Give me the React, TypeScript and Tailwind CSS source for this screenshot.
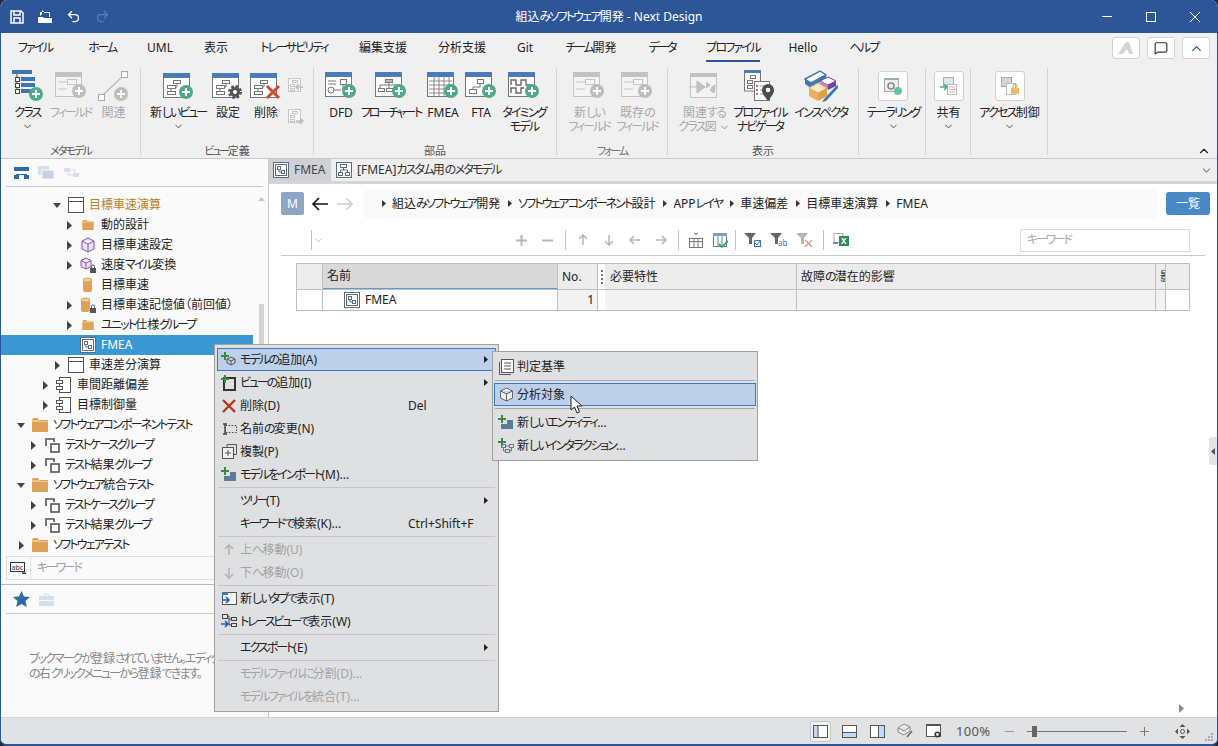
import type { ReactNode } from "react";
import { ChevronDown, ChevronUp, MessageSquare, Redo2, Undo2 } from "lucide-react";

const GREEN = "#4fa987";

// the kana in the screenshot's UI font run narrower than in Noto Sans CJK even with palt
function T({ children }: { children: string }) {
  const parts = children.split(/([ぁ-んァ-ヶー。]+)/).filter(Boolean);
  return (
    <span>
      {parts.map((p, i) => {
        if (!/^[ぁ-んァ-ヶー。]/.test(p)) return p;
        const bars = (p.match(/ー/g) ?? []).length;
        const cut = ((p.length - bars) * 1.8 + bars * 3) / p.length;
        return (
          <span key={i} style={{ letterSpacing: `${-cut}px` }}>
            {p}
          </span>
        );
      })}
    </span>
  );
}

function Badge({ x, y, dim }: { x: number; y: number; dim?: boolean }) {
  return (
    <g>
      <circle cx={x} cy={y} r="7" fill={dim ? "#bdbdbd" : GREEN} />
      <path d={`M${x - 4} ${y}h8M${x} ${y - 4}v8`} stroke="#fff" strokeWidth="2" />
    </g>
  );
}

function Win({ dim, children, extra }: { dim?: boolean; children?: ReactNode; extra?: ReactNode }) {
  const line = dim ? "#c4c4c4" : "#777";
  return (
    <svg width="32" height="28" viewBox="0 0 32 28" fill="none">
      <rect x="0.5" y="1.5" width="26" height="24" fill={dim ? "#f4f4f4" : "#fff"} stroke={line} />
      <rect x="0" y="1" width="27" height="5" fill={dim ? "#c2c2c2" : "#4a7db8"} />
      <g stroke={line}>{children}</g>
      {extra}
    </svg>
  );
}

const treeLines = (
  <>
    <rect x="10.5" y="8.5" width="7" height="3" />
    <rect x="4.5" y="13.5" width="8" height="3" />
    <rect x="4.5" y="19.5" width="8" height="3" />
    <path d="M14 12v3h-1M8 17v2" />
  </>
);

const fieldLines = (
  <>
    <path d="M3 11h6M3 18h6M9 11h3M9 18h3" />
    <rect x="12.5" y="8.5" width="9" height="5" />
  </>
);

function ClassIcon() {
  return (
    <svg width="32" height="32" viewBox="0 0 32 32" fill="none">
      <rect x="0" y="0" width="20" height="4" fill="#3d76b5" />
      <path d="M5 4v17h3M5 9h3M5 15h3" stroke="#444" />
      <g fill="#fff" stroke="#444">
        <rect x="3.5" y="7.5" width="4" height="4" />
        <rect x="3.5" y="13.5" width="4" height="4" />
        <rect x="3.5" y="19.5" width="4" height="4" />
      </g>
      <rect x="9" y="7" width="14" height="4" fill="#3d76b5" />
      <rect x="9" y="13" width="14" height="4" fill="#3d76b5" />
      <rect x="9" y="19" width="10" height="4" fill="#3d76b5" />
      <Badge x={24} y={24} />
    </svg>
  );
}

function AssocIcon() {
  return (
    <svg width="32" height="32" viewBox="0 0 32 32" fill="none">
      <path d="M5 25L25 6" stroke="#bdbdbd" strokeWidth="1.5" />
      <rect x="0.5" y="24.5" width="6" height="6" fill="#fff" stroke="#a8a8a8" />
      <rect x="23.5" y="1.5" width="6" height="6" fill="#fff" stroke="#a8a8a8" />
      <Badge x={23} y={24} dim />
    </svg>
  );
}

function SmallDim({ down }: { down?: boolean }) {
  return (
    <svg width="17" height="17" viewBox="0 0 17 17" fill="none" stroke="#c8c8c8">
      <rect x="1.5" y="1.5" width="12" height="13" fill="#f7f7f7" />
      <rect x="5.5" y="3.5" width="5" height="2" />
      <rect x="3.5" y="7.5" width="4" height="2" />
      <rect x="3.5" y="11.5" width="4" height="2" />
      <path d={down ? "M9 13h7M13 10l3 3-3 3" : "M9 10h7M12 7l-3 3 3 3"} stroke="#bcbcbc" strokeWidth="1.5" />
    </svg>
  );
}

function FlowIcon() {
  return (
    <Win extra={<Badge x={24} y={20} />}>
      <path d="M10 10h8M14 11v3M5 17v-3h18v3M14 14v3" />
      <rect x="10.5" y="8.5" width="7" height="3" />
      <rect x="3.5" y="17.5" width="6" height="3" />
      <rect x="11.5" y="17.5" width="6" height="3" />
    </Win>
  );
}

function DfdIcon() {
  return (
    <Win extra={<Badge x={24} y={20} />}>
      <path d="M3 10h8M3 13h8M9 19h7" />
      <rect x="15.5" y="8.5" width="6" height="5" />
      <circle cx="6" cy="19" r="3" />
      <path d="M18 14v5" />
    </Win>
  );
}

function GridIcon() {
  return (
    <Win extra={<Badge x={24} y={20} />}>
      <path d="M2 10h23M2 14h23M2 18h23M2 22h23M7 6v19M12 6v19M17 6v19M22 6v19" stroke="#8a8a8a" />
    </Win>
  );
}

function FtaIcon() {
  return (
    <Win extra={<Badge x={24} y={20} />}>
      <rect x="12.5" y="8.5" width="6" height="4" />
      <rect x="4.5" y="18.5" width="7" height="4" />
      <path d="M15 13v3H8v2" />
    </Win>
  );
}

function TimingIcon() {
  return (
    <Win extra={<Badge x={24} y={20} />}>
      <path d="M3 14V9h5v5h5V9h5v5h6M3 22v-5h5v5h5v-5h3" strokeWidth="1.4" stroke="#666" />
    </Win>
  );
}

function RelatedIcon() {
  return (
    <svg width="30" height="27" viewBox="0 0 30 27" fill="none">
      <rect x="1.5" y="1.5" width="26" height="24" fill="#f4f4f4" stroke="#c4c4c4" />
      <rect x="1" y="1" width="27" height="4" fill="#c2c2c2" />
      <path d="M0 15h12M8 9l8 6-8 6z M17 10l4 3-4 3M22 16l4-3-1 8-4-3" fill="#c2c2c2" stroke="#bbb" />
    </svg>
  );
}

function NavigatorIcon() {
  return (
    <svg width="33" height="32" viewBox="0 0 33 32" fill="none">
      <rect x="0.5" y="1" width="16" height="20" fill="#fff" stroke="#777" />
      <rect x="0" y="0" width="17" height="3" fill="#4a7db8" />
      <g stroke="#777" fill="#fff">
        <rect x="6.5" y="5.5" width="5" height="3" />
        <rect x="3.5" y="10.5" width="5" height="3" />
        <rect x="3.5" y="15.5" width="5" height="3" />
      </g>
      <rect x="10.5" y="11.5" width="15" height="19" fill="#fff" stroke="#777" />
      <path d="M13 15v12" stroke="#c0392b" strokeDasharray="2 2" strokeWidth="1.5" />
      <path d="M16 16h5M16 20h5M16 24h5" stroke="#999" />
      <path d="M24 31c-4-5-6-8-6-11a6 6 0 0112 0c0 3-2 6-6 11z" fill="#4c4c4c" />
      <circle cx="24" cy="20" r="2.3" fill="#fff" />
    </svg>
  );
}

function InspectorIcon() {
  return (
    <svg width="34" height="32" viewBox="0 0 34 32" fill="none">
      <path d="M1 9L16 1l6 4L7 13z" fill="#fff" stroke="#3d76b5" strokeWidth="1.5" />
      <path d="M1 9l6 4v5l-6-4z" fill="#3d76b5" />
      <path d="M7 13L22 5v3L7 18z" fill="#3d76b5" />
      <path d="M16 11l8-4 8 4-8 4z" fill="#fff" stroke="#7b3fa0" />
      <path d="M24 15l8-4v5l-8 4z" fill="#7b3fa0" />
      <path d="M16 11l8 4v5l-8-4z" fill="#b78ad0" />
      <path d="M5 18l9-5 9 5-9 5z" fill="#fbe9c8" stroke="#e8ad58" />
      <path d="M5 18l9 5v8l-9-5z" fill="#eab05f" />
      <path d="M14 23l9-5v8l-9 5z" fill="#e0a04a" />
      <path d="M33 15L20 29l-2 3 4-1 13-14z" fill="#3d76b5" />
    </svg>
  );
}

function SoftBox({ children }: { children: ReactNode }) {
  return (
    <div className="flex h-[30px] w-[30px] items-center justify-center rounded-[3px] border border-[#cfcfcf] bg-white">
      <svg width="20" height="20" viewBox="0 0 20 20" fill="none">
        {children}
      </svg>
    </div>
  );
}

const tailorIcon = (
  <>
    <rect x="1.5" y="2.5" width="14" height="13" fill="#eee" stroke="#aaa" />
    <rect x="1" y="2" width="15" height="2" fill="#9ab" />
    <circle cx="8" cy="10" r="3" stroke="#888" strokeWidth="1.5" />
    <circle cx="15" cy="15" r="4" fill="#6cc3a0" />
  </>
);
const shareIcon = (
  <>
    <rect x="4.5" y="1.5" width="10" height="8" fill="#dde5ef" stroke="#aab" />
    <rect x="8.5" y="8.5" width="9" height="10" fill="#fff" stroke="#bbb" />
    <path d="M10 11h6M10 13.5h6M10 16h6" stroke="#e3a9a0" />
    <path d="M1 11h6M5 8l3 3-3 3" stroke="#4fa987" strokeWidth="1.6" />
  </>
);
const accessIcon = (
  <>
    <rect x="1.5" y="1.5" width="10" height="9" fill="#d5d5d5" stroke="#aaa" />
    <rect x="6.5" y="7.5" width="9" height="11" fill="#fff" stroke="#bbb" />
    <rect x="11" y="12" width="8" height="6" fill="#eebb66" />
    <path d="M13 12V10a2 2 0 014 0v2" stroke="#d9a64f" />
  </>
);

function RBtn({
  w,
  icon,
  lines,
  chevron,
  dim,
  inlineChevron,
}: {
  w: string;
  icon: ReactNode;
  lines: string[];
  chevron?: boolean;
  dim?: boolean;
  inlineChevron?: boolean;
}) {
  return (
    <div className={`flex shrink-0 flex-col items-center ${w} ${dim ? "text-[#a8a8a8]" : "text-[#222]"}`}>
      <div className="flex h-[38px] items-start justify-center pt-[3px]">{icon}</div>
      {lines.map((l, i) => (
        <div key={l} className="flex items-center whitespace-nowrap text-[12px] leading-[14px]">
          <T>{l}</T>
          {inlineChevron && i === lines.length - 1 && <ChevronDown size={11} className="ml-[2px] text-[#888]" />}
        </div>
      ))}
      {chevron && <ChevronDown size={11} className="mt-[1px] text-[#444]" />}
    </div>
  );
}

function Group({ w, pl, label, dim, children }: { w: string; pl: string; label: string; dim?: boolean; children: ReactNode }) {
  return (
    <div className={`flex h-[87px] shrink-0 flex-col border-r border-[#d4d4d4] ${w}`}>
      <div className={`flex flex-1 items-start ${pl}`}>{children}</div>
      <div className={`-mb-[4px] h-[16px] text-center text-[11px] leading-[16px] ${dim ? "text-[#777]" : "text-[#555]"}`}>
        <T>{label}</T>
      </div>
    </div>
  );
}

const tabs = [
  { t: "ファイル", w: "w-[68px]" },
  { t: "ホーム", w: "w-[66px]" },
  { t: "UML", w: "w-[50px]" },
  { t: "表示", w: "w-[62px]" },
  { t: "トレーサビリティ", w: "w-[94px]" },
  { t: "編集支援", w: "w-[84px]" },
  { t: "分析支援", w: "w-[74px]" },
  { t: "Git", w: "w-[52px]" },
  { t: "チーム開発", w: "w-[80px]" },
  { t: "データ", w: "w-[62px]" },
  { t: "プロファイル", w: "w-[80px]" },
  { t: "Hello", w: "w-[60px]" },
  { t: "ヘルプ", w: "w-[62px]" },
];

function Ribbon() {
  return (
    <div className="h-[126px] shrink-0 border-b border-[#c8c8c8] bg-[#f0f0f0]">
      <div className="flex h-[34px] items-start">
        {tabs.map((x) => (
          <div key={x.t} className={`flex shrink-0 justify-center pt-[7px] ${x.w}`}>
            <span
              className={`h-[22px] whitespace-nowrap text-[12px] leading-[16px] text-[#222] ${
                x.t === "プロファイル" ? "border-b-[2px] border-[#2c5697]" : ""
              }`}
            >
              <T>{x.t}</T>
            </span>
          </div>
        ))}
        <div className="ml-auto flex gap-[7px] pr-[7px] pt-[4px]">
          <div className="flex h-[22px] w-[28px] items-center justify-center rounded-[3px] border border-[#d2d2d2] bg-white">
            <svg width="16" height="14" viewBox="0 0 16 14">
              <path d="M0 13L8 1h3l4 12H11L9 8 5 13z" fill="#d4d4d4" />
            </svg>
          </div>
          <div className="flex h-[22px] w-[28px] items-center justify-center rounded-[3px] border border-[#d2d2d2] bg-white">
            <MessageSquare size={14} className="text-[#333]" />
          </div>
          <div className="flex h-[22px] w-[28px] items-center justify-center rounded-[3px] border border-[#d2d2d2] bg-white">
            <ChevronUp size={15} className="text-[#2c5697]" />
          </div>
        </div>
      </div>
      <div className="flex h-[91px] items-start pt-px">
        <Group w="w-[140px]" pl="pl-[5px]" label="メタモデル">
          <RBtn w="w-[43px]" icon={<div className="-mt-px"><ClassIcon /></div>} lines={["クラス"]} chevron />
          <RBtn w="w-[43px]" dim icon={<Win dim extra={<Badge x={24} y={20} dim />}>{fieldLines}</Win>} lines={["フィールド"]} />
          <RBtn w="w-[43px]" dim icon={<div className="-mt-px"><AssocIcon /></div>} lines={["関連"]} />
        </Group>
        <Group w="w-[173px]" pl="pl-[6px]" label="ビュー定義">
          <RBtn w="w-[62px]" icon={<div className="pl-[2px] pt-[1px]"><Win extra={<Badge x={23} y={20} />}>{treeLines}</Win></div>} lines={["新しいビュー"]} chevron />
          <RBtn
            w="w-[38px]"
            icon={
              <div className="pt-[1px]">
                <Win
                  extra={
                    <g>
                      <circle cx="23" cy="20" r="5.5" stroke="#555" strokeWidth="3" strokeDasharray="2.5 1.8" />
                      <circle cx="23" cy="20" r="5" fill="#555" />
                      <circle cx="23" cy="20" r="2" fill="#fff" />
                    </g>
                  }
                >
                  {treeLines}
                </Win>
              </div>
            }
            lines={["設定"]}
          />
          <RBtn
            w="w-[38px]"
            icon={
              <div className="pt-[1px]">
                <Win extra={<path d="M17 14l12 12M29 14L17 26" stroke="#d24a2e" strokeWidth="3" />}>{treeLines}</Win>
              </div>
            }
            lines={["削除"]}
          />
          <div className="flex w-[20px] flex-col items-center gap-[14px] pt-[9px]">
            <SmallDim />
            <SmallDim down />
          </div>
        </Group>
        <Group w="w-[243px]" pl="pl-[9px]" label="部品">
          <RBtn w="w-[36px]" icon={<DfdIcon />} lines={["DFD"]} />
          <RBtn w="w-[64px]" icon={<FlowIcon />} lines={["フローチャート"]} />
          <RBtn w="w-[40px]" icon={<GridIcon />} lines={["FMEA"]} />
          <RBtn w="w-[36px]" icon={<FtaIcon />} lines={["FTA"]} />
          <RBtn w="w-[50px]" icon={<TimingIcon />} lines={["タイミング", "モデル"]} />
        </Group>
        <Group w="w-[111px]" pl="pl-[8px]" label="フォーム" dim>
          <RBtn w="w-[48px]" dim icon={<Win dim extra={<Badge x={24} y={20} dim />}>{fieldLines}</Win>} lines={["新しい", "フィールド"]} />
          <RBtn w="w-[48px]" dim icon={<Win dim extra={<Badge x={24} y={20} dim />}>{fieldLines}</Win>} lines={["既存の", "フィールド"]} />
        </Group>
        <Group w="w-[191px]" pl="pl-[6px]" label="表示">
          <RBtn w="w-[60px]" dim inlineChevron icon={<div className="pt-[1px]"><RelatedIcon /></div>} lines={["関連する", "クラス図"]} />
          <RBtn w="w-[52px]" icon={<div className="-mt-px"><NavigatorIcon /></div>} lines={["プロファイル", "ナビゲータ"]} />
          <RBtn w="w-[70px]" icon={<div className="-mt-px"><InspectorIcon /></div>} lines={["インスペクタ"]} />
        </Group>
        <Group w="w-[67px]" pl="pl-[1px]" label="">
          <RBtn w="w-[66px]" icon={<SoftBox>{tailorIcon}</SoftBox>} lines={["テーラリング"]} chevron />
        </Group>
        <Group w="w-[45px]" pl="pl-[1px]" label="">
          <RBtn w="w-[43px]" icon={<SoftBox>{shareIcon}</SoftBox>} lines={["共有"]} chevron />
        </Group>
        <Group w="w-[77px]" pl="pl-[1px]" label="">
          <RBtn w="w-[75px]" icon={<SoftBox>{accessIcon}</SoftBox>} lines={["アクセス制御"]} chevron />
        </Group>
        <div className="flex h-[87px] flex-1 items-end justify-end pr-[6px]">
          <ChevronUp size={14} className="-mb-[3px] text-[#222]" />
        </div>
      </div>
    </div>
  );
}

function Caret({ open }: { open?: boolean }) {
  return open ? (
    <svg width="9" height="5" viewBox="0 0 9 5">
      <path d="M0 0h8L4 5z" fill="#444" />
    </svg>
  ) : (
    <svg width="5" height="9" viewBox="0 0 5 9">
      <path d="M0 0l5 4.5L0 9z" fill="#444" />
    </svg>
  );
}

const Lock = () => (
  <g>
    <rect x="10" y="11" width="6" height="5" fill="#555" />
    <path d="M11.5 11V9.5a1.5 1.5 0 013 0V11" stroke="#555" fill="none" />
  </g>
);

function TreeIcon({ kind }: { kind: string }) {
  if (kind === "win")
    return (
      <svg width="16" height="16" viewBox="0 0 16 16" fill="#fff" stroke="#555">
        <rect x="0.5" y="0.5" width="15" height="15" />
        <path d="M0 4.5h16" />
      </svg>
    );
  if (kind === "folder" || kind === "bigfolder") {
    const big = kind === "bigfolder";
    return (
      <svg width={big ? 16 : 12} height={big ? 14 : 10} viewBox="0 0 16 14">
        <path d="M0 2l1-2h5l1 2h9v12H0z" fill="#dfa258" />
        <path d="M0 2h7l1 1h8v1H0z" fill="#eec48f" />
      </svg>
    );
  }
  if (kind === "cube" || kind === "cubelock")
    return (
      <svg width="16" height="16" viewBox="0 0 16 16" fill="none">
        {kind === "cube" ? (
          <path d="M8 1l6 3v8l-6 3-6-3V4zM2 4l6 3 6-3M8 7v8" fill="#eadff2" stroke="#8455a8" />
        ) : (
          <path d="M6 1l5 2.5v6l-5 2.5-5-2.5v-6zM1 3.5L6 6l5-2.5M6 6v6" fill="#eadff2" stroke="#8455a8" />
        )}
        {kind === "cubelock" && <Lock />}
      </svg>
    );
  if (kind === "cyl" || kind === "cyllock")
    return (
      <svg width="16" height="16" viewBox="0 0 16 16">
        <rect x={kind === "cyl" ? 3 : 1} y="2" width="9" height="13" rx="2" fill="#dfa258" />
        <ellipse cx={kind === "cyl" ? 7.5 : 5.5} cy="3" rx="4.5" ry="2" fill="#f0cd9b" stroke="#dfa258" />
        {kind === "cyllock" && <Lock />}
      </svg>
    );
  if (kind === "comp")
    return (
      <svg width="16" height="16" viewBox="0 0 16 16" fill="#fff" stroke="#555">
        <rect x="3.5" y="0.5" width="11" height="15" />
        <rect x="0.5" y="3.5" width="6" height="3" />
        <rect x="0.5" y="9.5" width="6" height="3" />
      </svg>
    );
  if (kind === "group")
    return (
      <svg width="15" height="15" viewBox="0 0 15 15" fill="none" stroke="#555" strokeWidth="1.6">
        <path d="M1 8V1h8v3" />
        <rect x="6" y="6" width="8" height="8" />
      </svg>
    );
  return <FmeaIcon />;
}

function FmeaIcon() {
  return (
    <svg width="16" height="16" viewBox="0 0 16 16" fill="#fff" stroke="#5b6b80">
      <rect x="0.5" y="0.5" width="15" height="15" />
      <rect x="2.5" y="2.5" width="11" height="11" />
      <rect x="4.5" y="4.5" width="3" height="3" />
      <rect x="8.5" y="8.5" width="3" height="3" />
      <path d="M6 8v2h2" fill="none" />
    </svg>
  );
}

const indent = ["pl-[14px]", "pl-[26px]", "pl-[38px]", "pl-[50px]", "pl-[62px]"];

const treeRows = [
  { l: 3, k: "win", t: "目標車速演算", open: true, c: "text-[#b97f26]" },
  { l: 4, k: "folder", t: "動的設計", arrow: true },
  { l: 4, k: "cube", t: "目標車速設定", arrow: true },
  { l: 4, k: "cubelock", t: "速度マイル変換", arrow: true },
  { l: 4, k: "cyl", t: "目標車速" },
  { l: 4, k: "cyllock", t: "目標車速記憶値（前回値）", arrow: true },
  { l: 4, k: "folder", t: "ユニット仕様グループ", arrow: true },
  { l: 4, k: "fmea", t: "FMEA", sel: true },
  { l: 3, k: "win", t: "車速差分演算", arrow: true },
  { l: 2, k: "comp", t: "車間距離偏差", arrow: true },
  { l: 2, k: "comp", t: "目標制御量", arrow: true },
  { l: 0, k: "bigfolder", t: "ソフトウェアコンポーネントテスト", open: true },
  { l: 1, k: "group", t: "テストケースグループ", arrow: true },
  { l: 1, k: "group", t: "テスト結果グループ", arrow: true },
  { l: 0, k: "bigfolder", t: "ソフトウェア統合テスト", open: true },
  { l: 1, k: "group", t: "テストケースグループ", arrow: true },
  { l: 1, k: "group", t: "テスト結果グループ", arrow: true },
  { l: 0, k: "bigfolder", t: "ソフトウェアテスト", arrow: true },
];

function LeftPanel() {
  return (
    <div className="flex w-[268px] shrink-0 flex-col overflow-hidden border-r border-[#c9c9c9] bg-[#fafafa]">
      <div className="mx-[5px] flex h-[28px] shrink-0 items-center gap-[8px] border-b border-[#c8c8c8] pl-[8px]">
        <svg width="15" height="12" viewBox="0 0 15 12" fill="#2d6ca8">
          <rect x="0" y="0" width="15" height="4" />
          <path d="M7 4v3M2 7h11v1H2z" />
          <rect x="0" y="8" width="5" height="4" />
          <rect x="10" y="8" width="5" height="4" />
        </svg>
        <svg width="17" height="13" viewBox="0 0 17 13" fill="#d5deea" className="ml-[1px]">
          <rect x="0" y="0" width="11" height="9" />
          <rect x="4" y="4" width="12" height="9" fill="#c6d2e1" stroke="#fafafa" />
        </svg>
        <svg width="15" height="13" viewBox="0 0 15 13" fill="#d5deea" className="ml-[1px]">
          <rect x="0" y="2" width="6" height="4" />
          <rect x="9" y="7" width="6" height="4" />
          <path d="M6 4h5v3M9 9H4V6" stroke="#d5deea" fill="none" />
        </svg>
      </div>
      <div className="flex h-[369px] shrink-0">
        <div className="w-[252px] shrink-0 pt-[8px]">
          {treeRows.map((r, i) => (
            <div
              key={i}
              className={`flex h-[20px] items-center whitespace-nowrap text-[12px] ${indent[r.l]} ${
                r.sel ? "bg-[#3a97d4] text-white" : r.c ?? "text-[#222]"
              }`}
            >
              <div className="flex w-[12px] justify-center">{r.open ? <Caret open /> : r.arrow ? <Caret /> : null}</div>
              <div className="flex w-[26px] justify-center">
                <TreeIcon kind={r.k} />
              </div>
              <T>{r.t}</T>
            </div>
          ))}
        </div>
        <div className="flex flex-1 flex-col items-center pl-[2px] pt-[10px]">
          <svg width="7" height="4" viewBox="0 0 7 4">
            <path d="M0 4l3.5-4L7 4z" fill="#c4c4c4" />
          </svg>
          <div className="mt-[103px] h-[60px] w-[5px] bg-[#d4d4d4]" />
        </div>
      </div>
      <div className="mx-[5px] flex h-[24px] shrink-0 items-center border border-[#dedede] bg-[#fafafa] text-[12px] text-[#a0a0a0]">
        <div className="flex h-full w-[24px] items-center justify-center border-r border-[#dedede]">
          <svg width="17" height="12" viewBox="0 0 17 12" fill="none" stroke="#333">
            <rect x="0.5" y="0.5" width="14" height="9" />
            <path d="M12 11h4l-2 1z" fill="#333" />
            <text x="1.5" y="7.5" fontSize="7" fill="#333" stroke="none">abc</text>
          </svg>
        </div>
        <span className="pl-[6px]"><T>キーワード</T></span>
      </div>
      <div className="mt-[4px] flex h-[29px] shrink-0 items-center gap-[9px] border-t border-[#b8b8b8] pl-[12px]">
        <svg width="17" height="16" viewBox="0 0 17 16">
          <path d="M8.5 0l2.5 5.5 6 .6-4.5 4 1.3 5.9-5.3-3-5.3 3 1.3-5.9L0 6.100l6-.6z" fill="#2d6ca8" />
        </svg>
        <svg width="15" height="13" viewBox="0 0 15 13" fill="#d5deea">
          <path d="M0 3h15v4H0zM0 8h15v5H0zM5 3V1h5v2H9V2H6v1z" />
        </svg>
      </div>
      <div className="relative mx-[5px] h-[103px] shrink-0 border-t border-[#c8c8c8] pl-[23px] pt-[37px] text-[12px] leading-[15px] text-[#888]">
        <div className="whitespace-nowrap"><T>ブックマークが登録されていません。エディタ</T></div>
        <div className="whitespace-nowrap"><T>の右クリックメニューから登録できます。</T></div>
      </div>
    </div>
  );
}

function Arrow({ dir, c }: { dir: "u" | "d" | "l" | "r"; c: string }) {
  const d = { u: "M7 12V2M3 6l4-4 4 4", d: "M7 2v10M3 8l4 4 4-4", l: "M12 7H2M6 3L2 7l4 4", r: "M2 7h10M8 3l4 4-4 4" }[dir];
  return (
    <svg width="14" height="14" viewBox="0 0 14 14" fill="none" stroke={c} strokeWidth="1.6">
      <path d={d} />
    </svg>
  );
}

const TSep = () => <div className="h-[20px] w-px shrink-0 bg-[#c4c4c4]" />;

function Slot({ w, children }: { w: string; children: ReactNode }) {
  return <div className={`flex shrink-0 justify-center ${w}`}>{children}</div>;
}

function Filter({ children }: { children: ReactNode }) {
  return (
    <svg width="18" height="16" viewBox="0 0 18 16" fill="none">
      <path d="M0 1h12L8 6v6H5V6z" fill="#666" />
      {children}
    </svg>
  );
}

function ContentToolbar() {
  return (
    <div className="mx-[12px] flex h-[35px] w-[924px] shrink-0 items-center border-b border-[#c8c8c8] pt-[4px]">
      <div className="w-[30px] shrink-0" />
      <TSep />
      <Slot w="w-[12px]">
        <ChevronDown size={11} className="text-[#b5b5b5]" />
      </Slot>
      <div className="w-[184px] shrink-0" />
      <Slot w="w-[26px]">
        <svg width="13" height="13" viewBox="0 0 13 13" stroke="#b8b8b8" strokeWidth="2">
          <path d="M1 6.500h11M6.500 1v11" />
        </svg>
      </Slot>
      <Slot w="w-[26px]">
        <svg width="13" height="13" viewBox="0 0 13 13" stroke="#b8b8b8" strokeWidth="2">
          <path d="M1 6.500h11" />
        </svg>
      </Slot>
      <div className="w-[5px] shrink-0" />
      <TSep />
      <div className="w-[4px] shrink-0" />
      <Slot w="w-[26px]"><Arrow dir="u" c="#b8b8b8" /></Slot>
      <Slot w="w-[26px]"><Arrow dir="d" c="#b8b8b8" /></Slot>
      <Slot w="w-[26px]"><Arrow dir="l" c="#b8b8b8" /></Slot>
      <Slot w="w-[26px]"><Arrow dir="r" c="#b8b8b8" /></Slot>
      <div className="w-[4px] shrink-0" />
      <TSep />
      <div className="w-[4px] shrink-0" />
      <Slot w="w-[26px]">
        <svg width="14" height="15" viewBox="0 0 14 15" fill="none" stroke="#777">
          <path d="M5 0h4L7 2.500z" fill="#4fa987" stroke="none" />
          <rect x="0.5" y="5.500" width="13" height="9" />
          <path d="M0 8.500h14M5 6v9M9 6v9" />
        </svg>
      </Slot>
      <Slot w="w-[22px]">
        <svg width="15" height="15" viewBox="0 0 15 15" fill="none" stroke="#5f7f9f">
          <rect x="0.500" y="0.500" width="13" height="13" fill="#fff" />
          <rect x="0" y="0" width="14" height="3" fill="#79a0c6" stroke="none" />
          <path d="M5 3v10M9 3v10" />
          <path d="M6 11l3 3 6-6" stroke="#3aa76d" strokeWidth="1.8" />
        </svg>
      </Slot>
      <div className="w-[4px] shrink-0" />
      <TSep />
      <div className="w-[4px] shrink-0" />
      <Slot w="w-[26px]">
        <Filter><rect x="10.500" y="8.500" width="6" height="6" stroke="#3d76b5" /><path d="M11 11l2 2 3-4" stroke="#3d76b5" /></Filter>
      </Slot>
      <Slot w="w-[26px]">
        <Filter><text x="8" y="14" fontSize="8" fill="#3d76b5">ab</text></Filter>
      </Slot>
      <Slot w="w-[26px]">
        <svg width="18" height="16" viewBox="0 0 18 16" fill="none">
          <path d="M0 1h12L8 6v6H5V6z" fill="#b5b5b5" />
          <path d="M9 8l7 7M16 8l-7 7" stroke="#e09a8d" strokeWidth="1.5" />
        </svg>
      </Slot>
      <div className="w-[5px] shrink-0" />
      <TSep />
      <div className="w-[4px] shrink-0" />
      <Slot w="w-[26px]">
        <svg width="16" height="14" viewBox="0 0 16 14">
          <rect x="1" y="0.500" width="9" height="9" fill="#fff" stroke="#aaa" />
          <rect x="6" y="3" width="10" height="10" fill="#2f8a57" />
          <text x="8" y="11" fontSize="8" fontWeight="700" fill="#fff">X</text>
          <path d="M0 10h5" stroke="#3d76b5" strokeWidth="1.500" />
        </svg>
      </Slot>
      <div className="flex-1" />
      <div className="mr-[15px] flex h-[23px] w-[170px] shrink-0 items-center border border-[#dcdcdc] bg-white pl-[6px] text-[12px] text-[#aaa]">
        <T>キーワード</T>
      </div>
    </div>
  );
}

function Table() {
  return (
    <div className="ml-[27px] mt-[7px] w-[894px] border border-[#bfbfbf] text-[12px] text-[#222]">
      <div className="flex h-[26px] border-b border-[#bfbfbf] bg-[#ececec]">
        <div className="w-[26px] shrink-0 border-r border-[#bfbfbf]" />
        <div className="flex w-[235px] shrink-0 items-center border-b border-r border-[#5b9bd5] border-r-[#bfbfbf] bg-[#d9d9d9] pl-[4px]">名前</div>
        <div className="flex w-[40px] shrink-0 items-center border-r border-[#bfbfbf] pl-[4px]">No.</div>
        <div className="flex w-[7px] shrink-0 flex-col items-center justify-center gap-[2px] bg-white">
          <span className="h-[2px] w-[2px] bg-[#777]" />
          <span className="h-[2px] w-[2px] bg-[#777]" />
          <span className="h-[2px] w-[2px] bg-[#777]" />
          <span className="h-[2px] w-[2px] bg-[#777]" />
        </div>
        <div className="flex w-[192px] shrink-0 items-center border-r border-[#bfbfbf] pl-[5px]">必要特性</div>
        <div className="flex w-[359px] shrink-0 items-center border-r border-[#bfbfbf] pl-[4px]">
          <T>故障の潜在的影響</T>
        </div>
        <div className="flex w-[10px] shrink-0 items-center overflow-hidden border-r border-[#bfbfbf] pl-[4px]">
          <span className="shrink-0">影</span>
        </div>
        <div className="flex-1" />
      </div>
      <div className="flex h-[20px]">
        <div className="w-[26px] shrink-0 border-r border-[#bfbfbf] bg-white" />
        <div className="flex w-[235px] shrink-0 items-center border-r border-[#bfbfbf] bg-white pl-[21px]">
          <FmeaIcon />
          <span className="pl-[5px]">FMEA</span>
        </div>
        <div className="flex w-[40px] shrink-0 items-center justify-end border-r border-[#bfbfbf] bg-[#f2f2f2] pr-[3px]">1</div>
        <div className="w-[7px] shrink-0 bg-white" />
        <div className="w-[192px] shrink-0 border-r border-[#bfbfbf] bg-[#f2f2f2]" />
        <div className="w-[359px] shrink-0 border-r border-[#bfbfbf] bg-[#f2f2f2]" />
        <div className="w-[10px] shrink-0 border-r border-[#bfbfbf] bg-[#f2f2f2]" />
        <div className="flex-1 bg-white" />
      </div>
    </div>
  );
}

const crumbs = ["組込みソフトウェア開発", "ソフトウェアコンポーネント設計", "APPレイヤ", "車速偏差", "目標車速演算", "FMEA"];

function RightPanel() {
  return (
    <div className="relative flex min-w-0 flex-1 flex-col bg-white">
      <div className="flex h-[25px] shrink-0 items-stretch border-b-[3px] border-[#d5d5d9] bg-[#efefef] text-[12px] text-[#333]">
        <div className="flex w-[62px] items-center gap-[5px] bg-[#d0d1d6] pl-[4px]">
          <FmeaIcon />
          <span className="text-[#444]">FMEA</span>
        </div>
        <div className="flex items-center gap-[5px] pl-[5px]">
          <svg width="16" height="16" viewBox="0 0 16 16" fill="#fff" stroke="#5b6b80">
            <rect x="0.500" y="0.500" width="15" height="15" />
            <rect x="4.500" y="2.500" width="6" height="3" />
            <rect x="2.500" y="10.500" width="4" height="3" />
            <rect x="9.500" y="10.500" width="4" height="3" />
            <path d="M7.500 6v2M4.500 10V8h7v2" fill="none" />
          </svg>
          <T>[FMEA]カスタム用のメタモデル</T>
        </div>
        <div className="ml-auto flex items-center pr-[4px]">
          <ChevronDown size={13} className="text-[#888]" />
        </div>
      </div>
      <div className="flex h-[37px] shrink-0 items-center pl-[12px] pt-[2px]">
        <div className="flex h-[23px] w-[23px] items-center justify-center rounded-[2px] bg-[#8fa5c5] text-[12px] text-white">M</div>
        <svg width="18" height="14" viewBox="0 0 18 14" fill="none" stroke="#111" strokeWidth="1.6" className="ml-[7px]">
          <path d="M17 7H2M8 1L2 7l6 6" />
        </svg>
        <svg width="18" height="14" viewBox="0 0 18 14" fill="none" stroke="#d0d0d0" strokeWidth="1.6" className="ml-[7px]">
          <path d="M1 7h15M10 1l6 6-6 6" />
        </svg>
        <div className="ml-[10px] flex h-[30px] w-[794px] shrink-0 items-center rounded-[5px] bg-[#fafafa] pl-[18px] text-[12px] text-[#222]">
          {crumbs.map((c) => (
            <span key={c} className="flex items-center whitespace-nowrap">
              <svg width="4" height="7" viewBox="0 0 4 7" className="mr-[6px]">
                <path d="M0 0l4 3.500L0 7z" fill="#333" />
              </svg>
              <span className="mr-[8px]"><T>{c}</T></span>
            </span>
          ))}
        </div>
        <div className="ml-[8px] flex h-[23px] w-[44px] shrink-0 items-center justify-center rounded-[3px] bg-[#4a89c8] text-[12px] text-white">一覧</div>
      </div>
      <ContentToolbar />
      <Table />
      <svg width="5" height="9" viewBox="0 0 5 9" className="absolute bottom-[4px] left-[910px]">
        <path d="M0 0l5 4.500L0 9z" fill="#8a8a8a" />
      </svg>
      <div className="absolute right-0 top-[278px] flex h-[28px] w-[8px] items-center justify-center rounded-l-[3px] bg-[#e4e4e4]">
        <svg width="4" height="7" viewBox="0 0 4 7">
          <path d="M4 0L0 3.500 4 7z" fill="#555" />
        </svg>
      </div>
    </div>
  );
}

function StatusBar() {
  return (
    <div className="flex h-[27px] shrink-0 items-center justify-end border-t border-[#d4d4d4] bg-[#e1e2e4] text-[#555]">
      <div className="mr-[4px] flex h-[21px] w-[21px] items-center justify-center rounded-[2px] border border-[#c8c8c8] bg-[#f0f0f0]">
        <svg width="15" height="13" viewBox="0 0 15 13" fill="none" stroke="#555">
          <rect x="0.500" y="0.500" width="14" height="12" fill="#fff" />
          <rect x="1" y="1" width="4" height="11" fill="#bcdcf7" stroke="none" />
          <path d="M5 0v13" />
        </svg>
      </div>
      <div className="flex w-[28px] justify-center">
        <svg width="15" height="13" viewBox="0 0 15 13" fill="none" stroke="#555">
          <rect x="0.500" y="0.500" width="14" height="12" fill="#fff" />
          <rect x="1" y="8" width="13" height="4" fill="#bcdcf7" stroke="none" />
          <path d="M0 7.500h15" />
        </svg>
      </div>
      <div className="flex w-[28px] justify-center">
        <svg width="15" height="13" viewBox="0 0 15 13" fill="none" stroke="#555">
          <rect x="0.500" y="0.500" width="14" height="12" fill="#fff" />
          <rect x="9" y="1" width="5" height="11" fill="#bcdcf7" stroke="none" />
          <path d="M8.500 0v13" />
        </svg>
      </div>
      <div className="flex w-[28px] justify-center">
        <svg width="16" height="16" viewBox="0 0 16 16" fill="none" stroke="#888">
          <path d="M1 5l6-4 6 3-6 4zM1 5v4l6 3 6-4V4" fill="#efefef" />
          <path d="M10 14l5-6" stroke="#666" strokeWidth="1.500" />
        </svg>
      </div>
      <div className="flex w-[30px] justify-center">
        <svg width="16" height="14" viewBox="0 0 16 14" fill="none" stroke="#555">
          <rect x="0.500" y="1.500" width="14" height="11" fill="#fff" />
          <path d="M0 1h15" strokeWidth="2" />
          <circle cx="11.500" cy="10.500" r="2.200" fill="#fff" stroke="#333" strokeWidth="1.600" />
        </svg>
      </div>
      <div className="w-[56px] shrink-0 pl-[7px] text-[13px] leading-[16px] tracking-[0.3px]">100%</div>
      <div className="h-px w-[9px] shrink-0 bg-[#999]" />
      <div className="ml-[13px] flex h-[9px] w-[100px] shrink-0 items-center bg-[linear-gradient(#777,#777)] bg-[length:100%_1px] bg-center bg-no-repeat">
        <div className="ml-[5px] h-[11px] w-[5px] bg-[#666]" />
      </div>
      <svg width="9" height="9" viewBox="0 0 9 9" stroke="#777" className="ml-[13px]">
        <path d="M0 4.500h9M4.500 0v9" />
      </svg>
      <svg width="15" height="15" viewBox="0 0 15 15" fill="#555" className="ml-[26px]">
        <path d="M7.500 0l3 3h-6zM7.500 15l-3-3h6zM0 7.500l3-3v6zM15 7.500l-3 3v-6z" />
        <circle cx="7.500" cy="7.500" r="2" fill="none" stroke="#555" />
      </svg>
      <svg width="9" height="9" viewBox="0 0 9 9" fill="#aaa" className="mb-[2px] ml-[15px] mr-[3px] self-end">
        <rect x="6" y="0" width="2" height="2" />
        <rect x="3" y="3" width="2" height="2" />
        <rect x="6" y="3" width="2" height="2" />
        <rect x="0" y="6" width="2" height="2" />
        <rect x="3" y="6" width="2" height="2" />
        <rect x="6" y="6" width="2" height="2" />
      </svg>
    </div>
  );
}

function MI({
  icon,
  label,
  shortcut,
  arrow,
  disabled,
  active,
}: {
  icon?: ReactNode;
  label: string;
  shortcut?: string;
  arrow?: boolean;
  disabled?: boolean;
  active?: boolean;
}) {
  return (
    <div
      className={`flex h-[23px] items-center whitespace-nowrap border text-[12px] ${
        active ? "border-[#3d79c9] bg-[#bdd0ea]" : "border-transparent"
      } ${disabled ? "text-[#a3a3a3]" : "text-[#222]"}`}
    >
      <div className="flex w-[22px] shrink-0 justify-center">{icon}</div>
      <div className="w-[168px] shrink-0">
        <T>{label}</T>
      </div>
      {shortcut && <div>{shortcut}</div>}
      {arrow && (
        <svg width="4" height="7" viewBox="0 0 4 7" className="ml-auto mr-[7px]">
          <path d="M0 0l4 3.500L0 7z" fill="#222" />
        </svg>
      )}
    </div>
  );
}

const Plus = ({ x = 0 }: { x?: number }) => (
  <path d={`M${x + 3} 0h2v3h3v2H${x + 5}v3H${x + 3}V5H${x}V3h${3}z`} fill="#3b8a3e" stroke="none" />
);

const MSep = () => <div className="mx-[1px] my-[1px] h-px bg-[#c6c6c8]" />;
const MSepWide = () => <div className="mx-[1px] my-[2px] h-px bg-[#a8a8a8]" />;

const entityIcon = (
  <svg width="16" height="15" viewBox="0 0 16 15">
    <Plus />
    <rect x="3" y="9" width="12" height="5" fill="#5b7b99" />
    <rect x="9" y="5" width="6" height="4" fill="#5b7b99" />
  </svg>
);

function ContextMenu() {
  return (
    <div className="absolute left-[214px] top-[344px] z-10 w-[285px] border border-[#a0a0a0] bg-[#dfe0e2] px-[2px] py-[3px]">
      <MI
        active
        arrow
        label="モデルの追加(A)"
        icon={
          <svg width="16" height="15" viewBox="0 0 16 15" fill="none">
            <Plus />
            <path d="M10 5l4 2v4l-4 2-4-2V7zM6 7l4 2 4-2M10 9v4" stroke="#555" />
          </svg>
        }
      />
      <MI
        arrow
        label="ビューの追加(I)"
        icon={
          <svg width="16" height="16" viewBox="0 0 16 16" fill="none">
            <rect x="3" y="3" width="11" height="12" stroke="#333" strokeWidth="2" />
            <Plus />
          </svg>
        }
      />
      <MI
        label="削除(D)"
        shortcut="Del"
        icon={
          <svg width="14" height="14" viewBox="0 0 14 14" stroke="#b5361c" strokeWidth="2.400">
            <path d="M1 1l12 12M13 1L1 13" />
          </svg>
        }
      />
      <MI
        label="名前の変更(N)"
        icon={
          <svg width="15" height="12" viewBox="0 0 15 12" fill="none" stroke="#444">
            <rect x="3.500" y="2.500" width="11" height="7" strokeDasharray="1.500 1.500" />
            <path d="M1 1h4M1 11h4M3 1v10" strokeWidth="1.400" />
          </svg>
        }
      />
      <MI
        label="複製(P)"
        icon={
          <svg width="15" height="15" viewBox="0 0 15 15" fill="none" stroke="#555">
            <path d="M5 3V0.500h9.500v10H12" />
            <rect x="0.500" y="3.500" width="11" height="11" fill="#eee" />
            <path d="M3 9h6M6 6v6" />
          </svg>
        }
      />
      <MI label="モデルをインポート(M)..." icon={entityIcon} />
      <MSep />
      <MI arrow label="ツリー(T)" />
      <MI label="キーワードで検索(K)..." shortcut="Ctrl+Shift+F" />
      <MSep />
      <MI disabled label="上へ移動(U)" icon={<Arrow dir="u" c="#b5b5b5" />} />
      <MI disabled label="下へ移動(O)" icon={<Arrow dir="d" c="#b5b5b5" />} />
      <MSep />
      <MI
        label="新しいタブで表示(T)"
        icon={
          <svg width="16" height="15" viewBox="0 0 16 15" fill="none">
            <rect x="1.500" y="1.500" width="14" height="12" fill="#f4f4f4" stroke="#555" />
            <rect x="1" y="1" width="6" height="3" fill="#3d76b5" />
            <path d="M1 9h6M5 6l3 3-3 3" stroke="#1f62a8" strokeWidth="1.600" />
          </svg>
        }
      />
      <MI
        label="トレースビューで表示(W)"
        icon={
          <svg width="16" height="15" viewBox="0 0 16 15" fill="none" stroke="#444">
            <rect x="1.500" y="0.500" width="5" height="4" />
            <rect x="10.500" y="3.500" width="5" height="3" />
            <rect x="10.500" y="9.500" width="5" height="3" />
            <path d="M6 2h2v9h2M8 5h2" />
            <path d="M0 10h6M4 7l3 3-3 3" stroke="#1f62a8" strokeWidth="1.600" />
          </svg>
        }
      />
      <MSep />
      <MI arrow label="エクスポート(E)" />
      <MSep />
      <MI disabled label="モデルファイルに分割(D)..." />
      <MI disabled label="モデルファイルを統合(T)..." />
    </div>
  );
}

function SubMenu() {
  return (
    <div className="absolute left-[492px] top-[351px] z-20 w-[266px] border border-[#a0a0a0] bg-[#dfe0e2] px-[1px] py-[3px]">
      <MI
        label="判定基準"
        icon={
          <svg width="15" height="16" viewBox="0 0 15 16" fill="none" stroke="#555">
            <path d="M0.500 3v12.500H12" />
            <rect x="2.500" y="0.500" width="12" height="13" fill="#fff" />
            <path d="M5 4h7M5 7h7M5 10h7" />
          </svg>
        }
      />
      <MSepWide />
      <MI
        active
        label="分析対象"
        icon={
          <svg width="15" height="15" viewBox="0 0 15 15" fill="#eee" stroke="#666">
            <path d="M7.500 1l6 3v7l-6 3-6-3V4zM1.500 4l6 3 6-3M7.500 7v7" />
          </svg>
        }
      />
      <MSepWide />
      <MI label="新しいエンティティ..." icon={entityIcon} />
      <MI
        label="新しいインタラクション..."
        icon={
          <svg width="16" height="15" viewBox="0 0 16 15" fill="none" stroke="#5b7b99">
            <Plus />
            <rect x="3.500" y="6.500" width="4" height="3" />
            <rect x="11.500" y="6.500" width="4" height="3" />
            <rect x="7.500" y="11.500" width="4" height="3" />
            <path d="M7 8h4M5.500 10v3h2M13.500 10v3h-2" />
          </svg>
        }
      />
    </div>
  );
}

export default function App() {
  return (
    <div className="relative h-[746px] w-[1218px] overflow-hidden bg-[#1f2a3a] [font-family:'Noto_Sans','Noto_Sans_CJK_JP',sans-serif] [font-feature-settings:'palt']">
      <div className="flex h-full flex-col overflow-hidden rounded-[7px] border-x border-b-[2px] border-[#2c5697] bg-[#f0f0f0]">
        <div className="flex h-[33px] shrink-0 items-center bg-[#2c5697] text-white">
          <div className="flex items-center gap-[14px] pl-[9px]">
            <svg width="14" height="14" viewBox="0 0 14 14" fill="none" stroke="#fff" strokeWidth="1.500">
              <path d="M1 1h10l2 2v10H1z" />
              <path d="M4 1v4h6V1M4 13V8h6v5" />
            </svg>
            <svg width="14" height="14" viewBox="0 0 14 14" fill="#fff">
              <path d="M0 7h5l1 1h8v5H0z" />
              <path d="M2 6V2h4l-2-2v4M6 2h6v5h-1V3H6z" />
            </svg>
            <Undo2 size={15} strokeWidth={2} />
            <Redo2 size={15} strokeWidth={2} className="text-[#5a7fb8]" />
          </div>
          <div className="absolute left-0 right-0 top-[9px] text-center text-[12px] leading-[16px]">
            <T>組込みソフトウェア開発 - Next Design</T>
          </div>
          <div className="z-10 ml-auto flex items-center gap-[34px] pr-[17px]">
            <div className="h-px w-[10px] bg-white" />
            <div className="h-[10px] w-[10px] border border-white" />
            <svg width="10" height="10" viewBox="0 0 10 10" stroke="#fff">
              <path d="M0 0l10 10M10 0L0 10" />
            </svg>
          </div>
        </div>
        <Ribbon />
        <div className="flex min-h-0 flex-1">
          <LeftPanel />
          <RightPanel />
        </div>
        <StatusBar />
      </div>
      <ContextMenu />
      <SubMenu />
      <svg width="15" height="20" viewBox="0 0 15 20" className="absolute left-[570px] top-[395px] z-30">
        <path d="M1 1v14l3.500-3 2.500 6 2.500-1-2.500-6h5z" fill="#fff" stroke="#222" />
      </svg>
    </div>
  );
}
